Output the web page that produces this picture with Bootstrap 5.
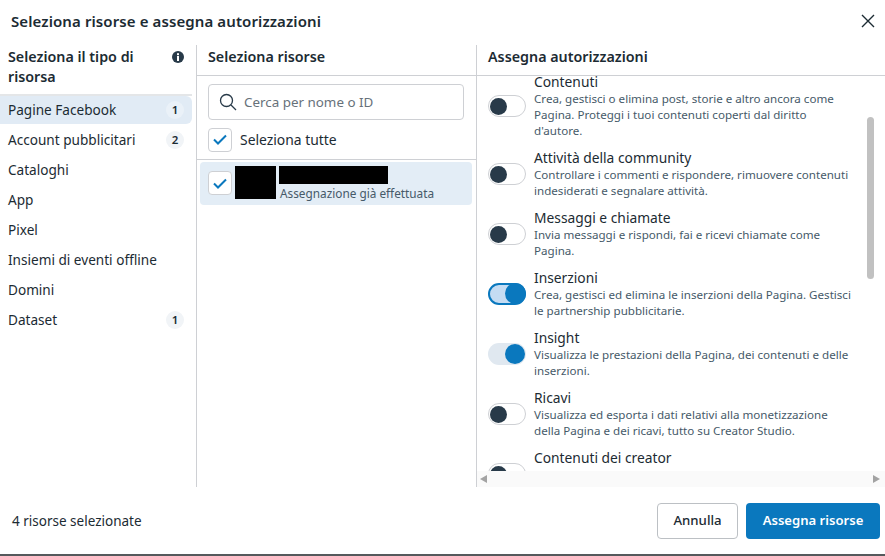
<!DOCTYPE html>
<html lang="it">
<head>
<meta charset="utf-8">
<title>Seleziona risorse</title>
<link rel="stylesheet" href="https://cdn.jsdelivr.net/npm/bootstrap@5.3.0/dist/css/bootstrap.min.css">
<style>
html,body{height:100%;overflow:hidden}
body{font-family:"Noto Sans","Open Sans",sans-serif;color:#1c2b33;background:#fff}
.shell{width:885px;height:556px;border-bottom:2px solid #55595c}
.top-bar{height:42px;padding:0 10px 0 11px}
.top-title{font-size:15px;font-weight:600;letter-spacing:.1px}
.cols{height:445px;padding-top:3px}
.pane-a{width:197px;border-right:1px solid #ced0d4}
.pane-b{width:280px;border-right:1px solid #ced0d4}
.pane-c{width:408px}
.pane-head{font-size:14.3px;font-weight:600;line-height:20px}
.head-a{height:51px;padding:2px 8px 0;border-bottom:2px solid #e4e6e8;width:192px}
.head-b{height:31px;padding:2px 11px 0;border-bottom:1px solid #ced0d4}
.type-row{height:30px;font-size:13.6px;padding:0 8px;width:192px}
.type-first{height:28px;margin-bottom:1px}
.type-on{background:#e1ebf5;border-radius:0 6px 6px 0}
.pill{min-width:18px;height:18px;padding:0 4px;border-radius:9px;background:#f1f4f7;font-size:11.5px;font-weight:600;line-height:18px;text-align:center}
.type-on .pill{background:#eaf1f8}
.finder{margin:8px 12px 0 11px;height:36px;border:1px solid #ced0d4;border-radius:4px;padding:0 10px;gap:7px;color:#67717a;font-size:13.4px}
.finder input{border:0;outline:0;padding:0;width:200px;font:inherit;background:transparent}
.finder input::placeholder{color:#67717a;opacity:1}
.tick{width:24px;height:24px;flex:none;border:1px solid #ced0d4;border-radius:4px;background:#fff}
.all-row{height:40px;padding:8px 11px;border-bottom:1px solid #ced0d4;gap:8px;font-size:13.9px}
.text-nudge{padding-top:2px}
.res-row{margin:2px 4px 0 3px;height:43px;background:#e3edf6;border-radius:4px;padding:4px 0 0 8px}
.tick-low{margin-top:5px}
.mask-a{width:41px;height:33px;background:#000;margin-left:3px;flex:none}
.mask-b{width:109px;height:18px;background:#000;margin-left:3px}
.res-note{font-size:11.8px;line-height:16px;color:#465a69;padding:1px 0 0 4px}
.perm-wrap{height:395px;overflow:hidden}
.perm-list{margin-top:-3px;padding-left:11px}
.perm-item{margin-bottom:10px;gap:8px}
.perm-name{font-size:13.8px;line-height:18px}
.perm-desc{font-size:11.6px;line-height:16px;color:#465a69;width:320px}
.sw{width:38px;height:22px;flex:none;border:1px solid #ced0d4;border-radius:11px;padding:2px 0 0 1px;background:#fff}
.sw-knob{width:17px;height:17px;border-radius:50%;background:#283a49;display:block}
.sw-live{background:#c5dcf3;border:2px solid #0a78be;padding:0 0 0 15px}
.sw-live .sw-knob{background:#0a78be;width:21px;height:21px;margin-top:-2px}
.sw-on{background:#e0e8f0;border:0;padding:1px 0 0 17px}
.sw-on .sw-knob{background:#0a78be;width:20px;height:20px}
.bar-v{position:absolute;right:11px;top:72px;width:7px;height:162px;background:#c1c1c1;border-radius:4px}
.scroll-h{height:16px;background:#fafafa;padding:0 5px 0 3px}
.arrow-l{width:0;height:0;border:4px solid transparent;border-left-width:0;border-right:7px solid #a3a3a3}
.arrow-r{width:0;height:0;border:4px solid transparent;border-right-width:0;border-left:7px solid #a3a3a3}
.end-bar{height:67px;padding:0 5px 0 12px;font-size:13.5px}
.btn-plain{width:81px;height:36px;border:1px solid #bcc0c4;border-radius:4px;font-size:13.2px;font-weight:500;color:#1c2b33;background:#fff;padding:0}
.btn-main{width:134px;height:36px;border:0;border-radius:4px;font-size:13.1px;font-weight:600;background:#0a78be;color:#fff;padding:0}
</style>
</head>
<body>
<div class="shell d-flex flex-column">
  <div class="top-bar d-flex align-items-center justify-content-between">
    <div class="top-title">Seleziona risorse e assegna autorizzazioni</div>
    <svg width="14" height="14" viewBox="0 0 14 14" aria-label="Chiudi"><path d="M1 1l12 12M13 1L1 13" stroke="#1c2b33" stroke-width="1.4" fill="none"/></svg>
  </div>
  <div class="cols d-flex">
    <div class="pane-a">
      <div class="head-a pane-head d-flex justify-content-between">
        <div>Seleziona il tipo di<br>risorsa</div>
        <svg class="mt-1" width="12" height="12" viewBox="0 0 12 12"><circle cx="6" cy="6" r="6" fill="#283a49"/><rect x="5" y="5" width="2" height="5" fill="#fff"/><rect x="5" y="2.2" width="2" height="2" fill="#fff"/></svg>
      </div>
      <div class="type-row type-first type-on d-flex align-items-center justify-content-between"><span>Pagine Facebook</span><span class="pill">1</span></div>
      <div class="type-row d-flex align-items-center justify-content-between"><span>Account pubblicitari</span><span class="pill">2</span></div>
      <div class="type-row d-flex align-items-center">Cataloghi</div>
      <div class="type-row d-flex align-items-center">App</div>
      <div class="type-row d-flex align-items-center">Pixel</div>
      <div class="type-row d-flex align-items-center">Insiemi di eventi offline</div>
      <div class="type-row d-flex align-items-center">Domini</div>
      <div class="type-row d-flex align-items-center justify-content-between"><span>Dataset</span><span class="pill">1</span></div>
    </div>
    <div class="pane-b">
      <div class="head-b pane-head">Seleziona risorse</div>
      <div class="finder d-flex align-items-center">
        <svg width="18" height="18" viewBox="0 0 18 18"><circle cx="7.5" cy="7.5" r="6" fill="none" stroke="#283a49" stroke-width="1.3"/><path d="M12 12l5 5" stroke="#283a49" stroke-width="1.3"/></svg>
        <input type="text" placeholder="Cerca per nome o ID">
      </div>
      <div class="all-row d-flex align-items-center">
        <span class="tick d-flex align-items-center justify-content-center"><svg width="14" height="11" viewBox="0 0 14 11"><path d="M1 5.5l4 4 8-8" fill="none" stroke="#0a78be" stroke-width="2"/></svg></span>
        <span class="text-nudge">Seleziona tutte</span>
      </div>
      <div class="res-row d-flex">
        <span class="tick tick-low d-flex align-items-center justify-content-center"><svg width="14" height="11" viewBox="0 0 14 11"><path d="M1 5.5l4 4 8-8" fill="none" stroke="#0a78be" stroke-width="2"/></svg></span>
        <div class="mask-a"></div>
        <div>
          <div class="mask-b"></div>
          <div class="res-note">Assegnazione già effettuata</div>
        </div>
      </div>
    </div>
    <div class="pane-c position-relative">
      <div class="head-b pane-head">Assegna autorizzazioni</div>
      <div class="perm-wrap">
        <div class="perm-list">
          <div class="perm-item d-flex align-items-center"><span class="sw"><span class="sw-knob"></span></span><div><div class="perm-name">Contenuti</div><div class="perm-desc">Crea, gestisci o elimina post, storie e altro ancora come Pagina. Proteggi i tuoi contenuti coperti dal diritto d'autore.</div></div></div>
          <div class="perm-item d-flex align-items-center"><span class="sw"><span class="sw-knob"></span></span><div><div class="perm-name">Attività della community</div><div class="perm-desc">Controllare i commenti e rispondere, rimuovere contenuti indesiderati e segnalare attività.</div></div></div>
          <div class="perm-item d-flex align-items-center"><span class="sw"><span class="sw-knob"></span></span><div><div class="perm-name">Messaggi e chiamate</div><div class="perm-desc">Invia messaggi e rispondi, fai e ricevi chiamate come Pagina.</div></div></div>
          <div class="perm-item d-flex align-items-center"><span class="sw sw-live"><span class="sw-knob"></span></span><div><div class="perm-name">Inserzioni</div><div class="perm-desc">Crea, gestisci ed elimina le inserzioni della Pagina. Gestisci le partnership pubblicitarie.</div></div></div>
          <div class="perm-item d-flex align-items-center"><span class="sw sw-on"><span class="sw-knob"></span></span><div><div class="perm-name">Insight</div><div class="perm-desc">Visualizza le prestazioni della Pagina, dei contenuti e delle inserzioni.</div></div></div>
          <div class="perm-item d-flex align-items-center"><span class="sw"><span class="sw-knob"></span></span><div><div class="perm-name">Ricavi</div><div class="perm-desc">Visualizza ed esporta i dati relativi alla monetizzazione della Pagina e dei ricavi, tutto su Creator Studio.</div></div></div>
          <div class="perm-item d-flex align-items-center"><span class="sw"><span class="sw-knob"></span></span><div><div class="perm-name">Contenuti dei creator</div><div class="perm-desc">Gestisci i contenuti brand e le autorizzazioni dei creator della Pagina.</div></div></div>
        </div>
      </div>
      <div class="scroll-h d-flex align-items-center justify-content-between"><span class="arrow-l"></span><span class="arrow-r"></span></div>
      <div class="bar-v"></div>
    </div>
  </div>
  <div class="end-bar d-flex align-items-center justify-content-between">
    <span class="text-nudge">4 risorse selezionate</span>
    <div class="d-flex gap-2">
      <button type="button" class="btn btn-plain">Annulla</button>
      <button type="button" class="btn btn-main">Assegna risorse</button>
    </div>
  </div>
</div>
<script src="https://cdn.jsdelivr.net/npm/bootstrap@5.3.0/dist/js/bootstrap.bundle.min.js"></script>
</body>
</html>
